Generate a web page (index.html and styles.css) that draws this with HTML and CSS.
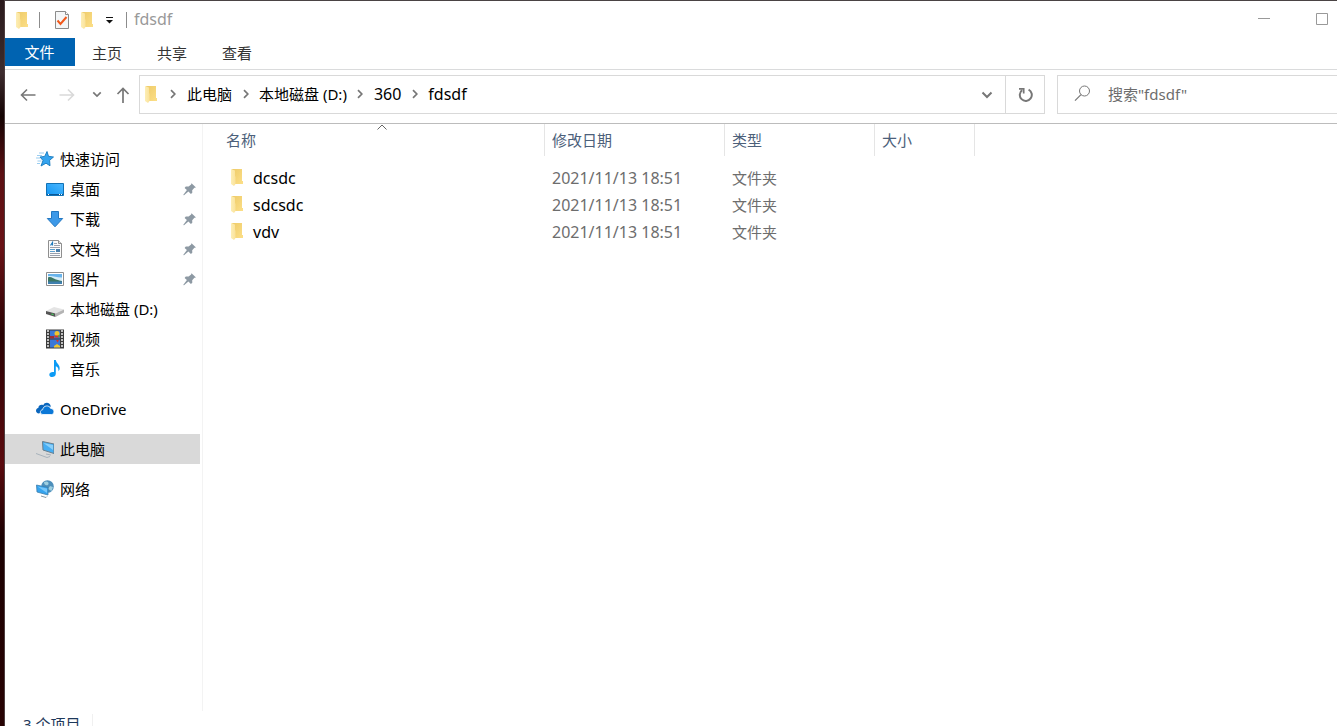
FILE: index.html
```html
<!DOCTYPE html>
<html lang="zh-CN">
<head>
<meta charset="utf-8">
<title>fdsdf</title>
<link rel="stylesheet" href="styles.css">
</head>
<body>
<svg class="defs" aria-hidden="true">
  <defs>
    <linearGradient id="g-flap" x1="0" x2="1"><stop offset="0" stop-color="#fdeeb5"/><stop offset="1" stop-color="#fae29a"/></linearGradient>
    <linearGradient id="g-back" x1="0" x2="1" y1="0" y2="1"><stop offset="0" stop-color="#eecb69"/><stop offset="1" stop-color="#fcdf88"/></linearGradient>
    <linearGradient id="g-blue" x1="0" x2="1" y1="1" y2="0"><stop offset="0" stop-color="#1296f3"/><stop offset="1" stop-color="#4cb8ff"/></linearGradient>
    <symbol id="folder" viewBox="0 0 13 18">
      <path d="M1 1h10v12h1v3H4z" fill="url(#g-back)"/>
      <path d="M0 1l4 1.500v5.500l.5 1V16l-1.500 2-3-2z" fill="url(#g-flap)"/>
    </symbol>
    <symbol id="pin" viewBox="0 0 14 14">
      <path d="M8.500 1.200L13 5.400l-1.600.3-2.200 2.500.1 2.600-1.400 1.100-2.500-2.500L1 13.300l-.8-.4L3.900 8 1.600 5.900 2.800 4.500l2.800.1 2.500-2z" fill="#8d99a3"/>
    </symbol>
    <symbol id="chev" viewBox="0 0 8 10"><path d="M2 1.200L5.800 5 2 8.800" fill="none" stroke="#777" stroke-width="1.700"/></symbol>
    <symbol id="down" viewBox="0 0 12 8"><path d="M1.500 1.500L6 6l4.500-4.500" fill="none" stroke="#777" stroke-width="2"/></symbol>
  </defs>
</svg>
<div class="window">
  <header class="titlebar">
    <svg class="folder"><use href="#folder"/></svg>
    <span class="bar bar-first"></span>
    <button class="plain" aria-label="属性"><svg width="16" height="20" viewBox="0 0 16 20"><path d="M1.500 1.500h10l3 3v14h-13z" fill="#f4f6f7" stroke="#8b8b8b"/><path d="M11.500 1.500v3h3" fill="#fff" stroke="#8b8b8b"/><path d="M3.500 10.500l3 3.500 6-7" fill="none" stroke="#f1591c" stroke-width="2"/></svg></button>
    <button class="plain new-folder" aria-label="新建文件夹"><svg class="folder"><use href="#folder"/></svg></button>
    <button class="plain customize" aria-label="自定义"><svg width="9" height="8" viewBox="0 0 9 8"><path d="M1 1.500h7" stroke="#111"/><path d="M1 4h7L4.500 7.500z" fill="#111"/></svg></button>
    <span class="bar"></span>
    <h1 class="title">fdsdf</h1>
    <div class="controls">
      <button aria-label="最小化"><svg width="14" height="14" viewBox="0 0 14 14"><path d="M1 6.500h12" stroke="#999"/></svg></button>
      <button aria-label="最大化"><svg width="14" height="14" viewBox="0 0 14 14"><path d="M1.500 1.500h11v11h-11z" fill="none" stroke="#999"/></svg></button>
    </div>
  </header>
  <nav class="ribbon">
    <button class="tab tab-file">文件</button>
    <button class="tab">主页</button>
    <button class="tab">共享</button>
    <button class="tab">查看</button>
  </nav>
  <div class="navbar">
    <div class="history">
      <button class="plain" aria-label="后退"><svg width="16" height="14" viewBox="0 0 16 14"><path d="M15.500 7H1.500M7 1.500L1.500 7 7 12.500" fill="none" stroke="#777" stroke-width="1.600"/></svg></button>
      <button class="plain forward" aria-label="前进"><svg width="16" height="14" viewBox="0 0 16 14"><path d="M.5 7h14M9 1.500L14.500 7 9 12.500" fill="none" stroke="#d9d9d9" stroke-width="1.600"/></svg></button>
      <button class="plain recent" aria-label="最近的位置"><svg width="10" height="7" viewBox="0 0 12 8"><use href="#down"/></svg></button>
      <button class="plain up" aria-label="上移"><svg width="14" height="16" viewBox="0 0 14 16"><path d="M7 16V1.500M1.500 7L7 1.500 12.500 7" fill="none" stroke="#777" stroke-width="1.700"/></svg></button>
    </div>
    <div class="address">
      <div class="crumbs">
        <svg class="folder"><use href="#folder"/></svg>
        <span class="sep"><svg width="8" height="10"><use href="#chev"/></svg></span>
        <a href="#">此电脑</a>
        <span class="sep"><svg width="8" height="10"><use href="#chev"/></svg></span>
        <a href="#">本地磁盘 (D:)</a>
        <span class="sep"><svg width="8" height="10"><use href="#chev"/></svg></span>
        <a href="#" class="latin">360</a>
        <span class="sep"><svg width="8" height="10"><use href="#chev"/></svg></span>
        <a href="#" class="latin">fdsdf</a>
      </div>
      <button class="plain history-drop" aria-label="以前的位置"><svg width="12" height="8"><use href="#down"/></svg></button>
      <button class="refresh" aria-label="刷新"><svg width="16" height="16" viewBox="0 0 16 16"><path d="M11.600 2.600A6 6 0 1 1 5.200 3.100" fill="none" stroke="#777" stroke-width="2"/><path d="M2 1.800h4.700v4.700" fill="none" stroke="#777" stroke-width="1.700"/></svg></button>
    </div>
    <label class="search">
      <svg width="17" height="17" viewBox="0 0 17 17"><circle cx="10.500" cy="6" r="5" fill="none" stroke="#777"/><path d="M7 9.700L1 15.700" stroke="#777" stroke-width="1.200"/></svg>
      <input type="text" aria-label="搜索" placeholder='搜索"fdsdf"'>
    </label>
  </div>
  <div class="content">
    <aside class="sidebar">
      <ul>
        <li><a href="#"><svg class="ico" viewBox="0 0 18 18"><path d="M11 1.500l1.500 4.800 5 .7-3.900 3.300.4 5.500-4-2.600-5 2.800 2-5.500L4 7l4.700-.6z" fill="#35a4ef" stroke="#1679bd" stroke-width=".9"/><path d="M3 3h5M1 5.500h5M0 8h4M1.500 11h4M1 13.500h3" stroke="#8ec7ee" stroke-width=".9"/></svg>快速访问</a></li>
        <li class="child"><a href="#"><svg class="ico" viewBox="0 0 18 18"><path d="M.5 3.500h17v12H.5z" fill="url(#g-blue)" stroke="#1272b5"/><path d="M1 14.500h16" stroke="#0b5796"/><path d="M2 14.500h1M13 14.500h1M15 14.500h1" stroke="#fff"/></svg>桌面</a><svg class="pin"><use href="#pin"/></svg></li>
        <li class="child"><a href="#"><svg class="ico" viewBox="0 0 18 18"><path d="M5.500 1.500h7v7h4.200L9 16.800 1.300 8.500h4.200z" fill="#3d99e8" stroke="#2378c2"/></svg>下载</a><svg class="pin"><use href="#pin"/></svg></li>
        <li class="child"><a href="#"><svg class="ico" viewBox="0 0 18 18"><path d="M2.500.5h10l3 3v14h-13z" fill="#fbfbfb" stroke="#8f8f8f"/><path d="M12.500.5v3h3" fill="#ddd" stroke="#8f8f8f"/><path d="M4.500 5.500L6.500 2.500v3" fill="none" stroke="#1c79bc" stroke-width="1.200"/><path d="M8 3.500h3M8 5.500h6M4 7.500h10M4 13.500h10M4 15.500h10" stroke="#9aa0ac"/><path d="M4 9.500h5M4 11.500h5" stroke="#5b9fce"/><path d="M10 9h4v3h-4z" fill="#4a7fab"/></svg>文档</a><svg class="pin"><use href="#pin"/></svg></li>
        <li class="child"><a href="#"><svg class="ico" viewBox="0 0 18 18"><path d="M.5 2.500h17v13H.5z" fill="#fff" stroke="#8e8e8e"/><path d="M2 4h14v10H2z" fill="#69b4ec"/><path d="M2 6c4-.5 8 1 14 1.500V12H2z" fill="#d6edf8"/><path d="M2 7.500c3-1.500 5 1 8 1.900s4 1 6 1.600V12H2z" fill="#3b7664"/><path d="M2 11.500h14V14H2z" fill="#3f7fae"/></svg>图片</a><svg class="pin"><use href="#pin"/></svg></li>
        <li class="child"><a href="#"><svg class="ico" viewBox="0 0 18 18"><path d="M0 11l8-4 10 2.500-8.500 4z" fill="#e4e4e4"/><path d="M0 11l9.500 2.500V17L0 14z" fill="#555"/><path d="M9.500 13.500l8.500-4v3L9.500 17z" fill="#b4b4b4"/><path d="M5.500 14l2 .6" stroke="#43d35c" stroke-width="1.200"/></svg>本地磁盘 (D:)</a></li>
        <li class="child"><a href="#"><svg class="ico ico-tall" viewBox="0 0 18 20"><path d="M0 .5h18v19H0z" fill="#3b3b3b"/><path d="M4 1.500h10v8H4zM4 10.500h10v8H4z" fill="#3a78d8"/><path d="M1 2h2M1 5h2M1 8h2M1 11h2M1 14h2M1 17h2M15 2h2M15 5h2M15 8h2M15 11h2M15 14h2M15 17h2" stroke="#eee" stroke-width="1.600"/><circle cx="11" cy="4.500" r="2.500" fill="#f0c52d"/><path d="M8.500 6.500h5v2h-5zM10 11h3l-1.500 2.500z" fill="#d43729"/><path d="M4 7h4v2.500H4z" fill="#a02d32"/><path d="M8 17l3-2 3 2v1.500H8z" fill="#f0c52d"/><path d="M12 6.500h2v1.500h-2z" fill="#48a646"/></svg>视频</a></li>
        <li class="child"><a href="#"><svg class="ico" viewBox="0 0 18 18"><path d="M8 0h1.800c.3 3.500 4.700 4.500 3.700 9.700l-1.200 1.500c.6-3-.7-4.200-2.500-5v7.600c0 4-6.500 4.500-6.500.9 0-2.200 2.500-3.200 4.700-2.600z" fill="#0c9bf5"/></svg>音乐</a></li>
      </ul>
      <ul>
        <li><a href="#"><svg class="ico" viewBox="0 0 18 18"><path d="M3 13.500C-1 13-.7 8.500 2.300 8 2.500 5 5.500 4 7.300 5.200 9 1.200 14.500 2.500 14.800 6.500" fill="#0a66bd"/><path d="M7 14.500c-3.500 0-3.500-4.500-.3-4.800.3-4.500 6.800-5 8-1.200 3.800-.3 4.500 5.500.8 6z" fill="#0b78d7" stroke="#fff" stroke-width=".8"/></svg>OneDrive</a></li>
      </ul>
      <ul>
        <li class="selected"><a href="#" aria-current="true"><svg class="ico" viewBox="0 0 18 18"><path d="M6.500 1.500L18 4v9.500L7 10z" fill="#47aef3" stroke="#697e8c"/><path d="M7.500 3L17 10V5z" fill="#8bd0fa"/><path d="M10 14l5 1M0 13.500l11 4 3-1" fill="none" stroke="#a8b2bb"/></svg>此电脑</a></li>
      </ul>
      <ul>
        <li><a href="#"><svg class="ico" viewBox="0 0 18 18"><circle cx="11.500" cy="6.500" r="6.300" fill="#4d8fbb"/><path d="M8 2c3-1.500 5 0 4.500 2S8 6 8 2zM14 6l3 1-1.500 4L12 9z" fill="#9fcfe0"/><path d="M.5 5l11.500 2.500V15L1 12z" fill="#35a4ef" stroke="#3c7dab" stroke-width=".8"/><path d="M1.500 6.500L11 13V8.500z" fill="#77c7fb"/><path d="M5 16l5 1.500 1-1" fill="none" stroke="#8799a4"/></svg>网络</a></li>
      </ul>
    </aside>
    <main class="files">
      <table>
        <colgroup><col class="c-name"><col class="c-date"><col class="c-type"><col class="c-size"></colgroup>
        <thead>
          <tr><th>名称<svg class="sort" viewBox="0 0 10 6"><path d="M.5 5.500L5 1l4.500 4.500" fill="none" stroke="#666"/></svg></th><th>修改日期</th><th>类型</th><th>大小</th></tr>
        </thead>
        <tbody>
          <tr><td><span class="file"><svg class="folder"><use href="#folder"/></svg>dcsdc</span></td><td class="latin">2021/11/13 18:51</td><td>文件夹</td><td></td></tr>
          <tr><td><span class="file"><svg class="folder"><use href="#folder"/></svg>sdcsdc</span></td><td class="latin">2021/11/13 18:51</td><td>文件夹</td><td></td></tr>
          <tr><td><span class="file"><svg class="folder"><use href="#folder"/></svg>vdv</span></td><td class="latin">2021/11/13 18:51</td><td>文件夹</td><td></td></tr>
        </tbody>
      </table>
    </main>
  </div>
  <footer class="status"><span>3 个项目</span></footer>
</div>
</body>
</html>
```
FILE: styles.css
```css
* { box-sizing: border-box; }
body {
  margin: 0;
  height: 100vh;
  overflow: hidden;
  background: linear-gradient(#2a1a1c 0, #3d2c2e 10%, #140303 16%, #5c1013 24%, #6a1216 34%, #2b0304 46%, #4c080b 58%, #5a0a0e 64%, #1c0102 74%, #280203 100%);
  font: 15px/20px "Noto Sans", "Noto Sans CJK SC", sans-serif;
  color: #000;
}
.defs { position: absolute; width: 0; height: 0; }
button { font: inherit; color: inherit; border: 0; background: none; padding: 0; cursor: default; }
a { color: inherit; text-decoration: none; }
svg { flex: none; display: block; }
ul { list-style: none; margin: 0 0 10px; padding: 0; }
.latin, .file { font-size: 16px; }
.folder { width: 13px; height: 18px; }

/* The status bar runs past the lower edge of the viewport. */
.window {
  display: flex;
  flex-direction: column;
  height: calc(100vh + 15px);
  margin-left: 4px;
  border-top: 1px solid #4a4344;
  border-left: 1px solid #4c3c3e;
  background: #fff;
  background-clip: padding-box;
}

.titlebar { display: flex; align-items: center; height: 37px; padding-left: 11px; }
.bar { width: 1px; height: 16px; background: #8c8c8c; }
.bar-first { margin: 0 14px 0 10px; }
.new-folder { margin-left: 11px; }
.customize { margin: 0 12px 0 11px; }
.title { margin: 0 0 0 7px; padding-bottom: 2px; font-size: 16px; font-weight: 400; color: #999; }
.controls { display: flex; margin: 0 -14px 0 auto; padding-bottom: 1px; }
.controls button { display: flex; justify-content: center; width: 58px; }

.ribbon { display: flex; height: 32px; border-bottom: 1px solid #dadbdc; }
.tab { width: 65px; height: 30px; padding-right: 1px; color: #333; }
.tab-file { width: 70px; height: 28px; background: #0063b1; color: #fff; }

.navbar { display: flex; height: 54px; padding-top: 5px; border-bottom: 1px solid #bcbcbc; }
.history { display: flex; align-items: center; height: 39px; width: 134px; padding-left: 15px; }
.forward { margin-left: 23px; }
.recent { margin-left: 17px; }
.up { margin-left: 14px; }
.address { display: flex; align-items: center; flex: 1; height: 39px; padding-left: 5px; border: 1px solid #d9d9d9; }
.crumbs { display: flex; align-items: center; padding-bottom: 2px; }
.sep { display: flex; justify-content: center; width: 27px; }
.crumbs > .folder + .sep { width: 29px; }
.history-drop { margin: 0 12px 0 auto; }
.refresh { display: flex; align-items: center; justify-content: center; width: 39px; height: 37px; border-left: 1px solid #d9d9d9; }
.search { display: flex; align-items: center; gap: 17px; width: 280px; height: 39px; margin-left: 12px; padding: 0 0 2px 16px; border: 1px solid #d9d9d9; border-right: 0; }
.search input { flex: 1; min-width: 0; padding: 0; border: 0; outline: 0; background: none; font: inherit; }
.search input::placeholder { color: #6d6d6d; opacity: 1; }

.content { display: flex; flex: 1; min-height: 0; }
.sidebar { width: 198px; padding-top: 20px; border-right: 1px solid #f3f3f3; }
.sidebar li { display: flex; align-items: center; height: 30px; margin-right: 2px; padding: 0 3px 0 31px; }
.sidebar .child { padding-left: 41px; }
.sidebar .selected { background: #d9d9d9; }
.sidebar a { display: flex; align-items: center; gap: 6px; flex: 1; }
.ico { width: 18px; height: 18px; }
.ico-tall { height: 20px; }
.pin { width: 14px; height: 14px; }

.files { flex: 1; overflow: hidden; }
table { table-layout: fixed; width: 772px; border-spacing: 0; }
.c-name { width: 342px; }
.c-date { width: 180px; }
.c-type { width: 150px; }
.c-size { width: 100px; }
th { position: relative; height: 32px; padding: 0 0 0 7px; border-right: 1px solid #e5e5e5; text-align: left; font-weight: 400; color: #4c607a; }
th:first-child { padding-left: 23px; }
.sort { position: absolute; top: 0; left: 51%; width: 10px; height: 6px; }
tbody::before { content: ""; display: block; height: 8px; }
td { height: 27px; padding: 0 0 0 7px; color: #6d6d6d; }
td:first-child { padding-left: 28px; color: #000; }
.file { display: flex; align-items: center; gap: 9px; }
.file .folder { margin-bottom: 2px; }

.status { display: flex; height: 30px; padding: 3px 0 7px 18px; color: #1e395b; }
.status span { padding-right: 12px; border-right: 1px solid #f0f0f0; }
```
